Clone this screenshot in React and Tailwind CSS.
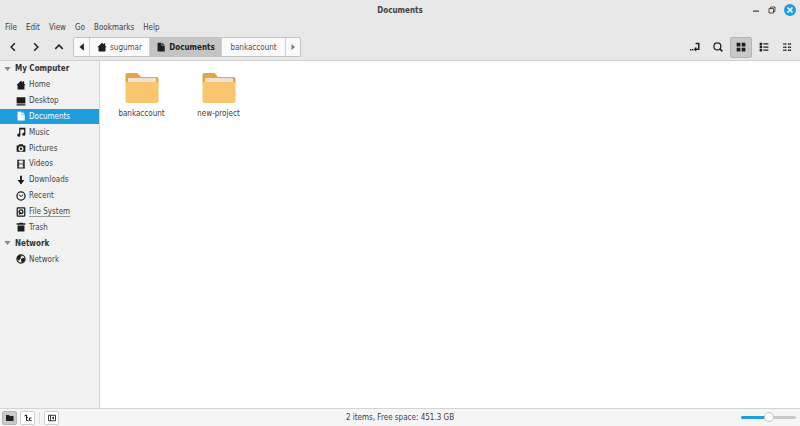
import React, { useState } from 'react';


const menus = ['File', 'Edit', 'View', 'Go', 'Bookmarks', 'Help'];

const places = [
  { id: 'home', label: 'Home' },
  { id: 'desktop', label: 'Desktop' },
  { id: 'documents', label: 'Documents' },
  { id: 'music', label: 'Music' },
  { id: 'pictures', label: 'Pictures' },
  { id: 'videos', label: 'Videos' },
  { id: 'downloads', label: 'Downloads' },
  { id: 'recent', label: 'Recent' },
  { id: 'filesystem', label: 'File System' },
  { id: 'trash', label: 'Trash' },
];

const folders = ['bankaccount', 'new-project'];

// 16x16 symbolic icons
const shapes = {
  home: <path d="M8 1 0.5 8.500H2.500V15h11V8.500h2L13 6V2h-2v2z" />,
  desktop: <path d="M1 2h14v10H1zM1 13h14v2H1z" />,
  documents: <path d="M2.500 1H9v5h5v9H2.500zM10 1l4 4h-4z" />,
  music: <path d="M5 1h10v10.500a2.500 2.500 0 1 1-2-2.400V4H7v9a2.500 2.500 0 1 1-2-2.400z" />,
  pictures: <path fillRule="evenodd" d="M5 2h6l1 2h3v10H1V4h3zM8 5a4 4 0 1 0 0 8 4 4 0 0 0 0-8zm0 2a2 2 0 1 1 0 4 2 2 0 0 1 0-4z" />,
  videos: <path fillRule="evenodd" d="M2 1h12v14H2zM5 2.500v4.500h6V2.500zm0 6v5h6v-5zM3 3v1.500h1V3zm0 4v1.500h1V7zm0 4v1.500h1V11zm9-8v1.500h1V3zm0 4v1.500h1V7zm0 4v1.500h1V11z" />,
  downloads: <path d="M6.500 1h3v7H13.500L8 15 2.500 8h4z" />,
  recent: (
    <g fill="none" stroke="currentColor" strokeWidth="2">
      <circle cx="8" cy="8" r="6.500" />
      <path d="M4.500 6 8 8.500l3.500-2.500" strokeWidth="1.500" />
    </g>
  ),
  filesystem: (
    <g fill="none" stroke="currentColor" strokeWidth="2">
      <rect x="2" y="1.500" width="12" height="13" rx="1" />
      <circle cx="8" cy="7.500" r="3" />
      <path d="M7.500 8 5 12" />
    </g>
  ),
  trash: <path d="M1 2h4V1h6v1h4v2.500H1zM2.500 5.500h11V15h-11z" />,
  network: (
    <>
      <circle cx="8" cy="8" r="6.500" fill="none" stroke="currentColor" strokeWidth="2" />
      <path d="M2 4 7 1l2 2-2 2 1 2-2 1-1 3-3-3zM8 8l4-2 2.500 3L11 14l-2-1-1-3z" />
    </>
  ),
  prev: <path d="M11 2v12L4 8z" />,
  next: <path d="M5 2v12l7-6z" />,
  back: <path d="M11 2 5 8l6 6" fill="none" stroke="currentColor" strokeWidth="2.400" />,
  forward: <path d="M5 2l6 6-6 6" fill="none" stroke="currentColor" strokeWidth="2.400" />,
  up: <path d="M2 11l6-6 6 6" fill="none" stroke="currentColor" strokeWidth="2.400" />,
  entry: (
    <>
      <path d="M9 2.500h5v9H9" fill="none" stroke="currentColor" strokeWidth="2.400" />
      <path d="M10 7.500v8l-4-4zM0 11h2.200v2.400H0zM3.200 11h2.200v2.400H3.200z" />
    </>
  ),
  search: (
    <g fill="none" stroke="currentColor" strokeWidth="2">
      <circle cx="7" cy="7" r="5.500" />
      <path d="M11 11l4 4" strokeWidth="2.500" />
    </g>
  ),
  grid: <path d="M1 1h6v6H1zM9 1h6v6H9zM1 9h6v6H1zM9 9h6v6H9z" />,
  list: <path d="M1 1h4v4H1zM1 6h4v4H1zM1 11h4v4H1zM7 2h8v2H7zM7 7h8v2H7zM7 12h8v2H7z" />,
  compact: <path d="M2 2h2v2.500H2zM4.500 2h2.500v2.500H4.500zM2 7h2v2.500H2zM4.500 7h2.500v2.500H4.500zM2 12h2v2.500H2zM4.500 12h2.500v2.500H4.500zM9.500 2h2v2.500h-2zM12 2h2.500v2.500H12zM9.500 7h2v2.500h-2zM12 7h2.500v2.500H12zM9.500 12h2v2.500h-2zM12 12h2.500v2.500H12z" />,
  folder: <path d="M0 2h6l1.500 2H15v10H0z" />,
  tree: (
    <g fill="none" stroke="currentColor" strokeWidth="2">
      <path d="M1 4l4-2v11h4M5 7h3" />
      <path d="M15 8h-4v5h4" />
    </g>
  ),
  panel: (
    <>
      <path d="M1 2.500h14v11H1zM5 2.500v11" fill="none" stroke="currentColor" strokeWidth="1.800" />
      <path d="M12 5v6L7 8z" />
    </>
  ),
  minimize: <path d="M2 9h12v2.500H2z" />,
  restore: <path d="M2 5h9v9H2zM5 5V2h9v9h-3" fill="none" stroke="currentColor" strokeWidth="1.800" />,
  close: <path d="M3 3l10 10M13 3 3 13" fill="none" stroke="currentColor" strokeWidth="3" />,
};

const Icon = ({ name, className = 'size-[10px]' }) => (
  <svg viewBox="0 0 16 16" fill="currentColor" aria-hidden="true" className={`shrink-0 ${className}`}>
    {shapes[name]}
  </svg>
);

const Folder = () => (
  <svg viewBox="0 0 34 30" aria-hidden="true" className="w-[34px] h-[30px]">
    <path d="M2 0h10.500l3.500 4h16q1.500 0 1.500 2v4h-33V2q0-2 1.500-2z" fill="#dfa64c" />
    <rect x="3" y="5" width="28" height="8" rx="1" fill="#ece3d3" />
    <path d="M2 9h30q1.500 0 1.500 1v18q0 2-2 2h-29q-2 0-2-2V10q0-1 1.500-1z" fill="#f9c56f" />
  </svg>
);

const SectionTitle = ({ children }) => (
  <h2 className="flex items-center gap-1 pl-1 font-bold text-[#303030]">
    <svg viewBox="0 0 8 5" aria-hidden="true" className="w-[7px] h-[4px] fill-[#888]">
      <path d="M0 0h8L4 5z" />
    </svg>
    {children}
  </h2>
);

const Place = ({ id, label, active, onClick }) => (
  <button
    onClick={() => onClick(id)}
    className={`w-full min-h-0 flex items-center gap-[3px] pl-4 ${active ? 'bg-[#1f9ede] text-white' : 'text-[#454545]'}`}
  >
    <Icon name={id} className={active ? 'size-[10px] text-white' : 'size-[10px] text-[#1c1c1c]'} />
    <span className={id === 'filesystem' ? 'underline underline-offset-2 decoration-[#999]' : ''}>{label}</span>
  </button>
);


const App = () => {
  const [place, setPlace] = useState('documents');
  const [view, setView] = useState('grid');
  const [zoom, setZoom] = useState(50);

  const viewButton = (id) =>
    `w-[22px] h-[21px] grid place-items-center rounded-xs border ${view === id ? 'bg-[#c9c9c9] border-[#b4b4b4]' : 'border-transparent'}`;

  return (
    <div className="min-h-screen flex flex-col bg-[#e8e8e8] font-['DejaVu_Sans_Condensed','Open_Sans',sans-serif] text-[8px] leading-[11px] text-[#404040]">

      {/* Title bar */}
      <header className="h-5 grid grid-cols-[1fr_auto_1fr] items-center px-1">
        <h1 className="col-start-2 font-semibold">Documents</h1>
        <div className="flex items-center justify-end gap-2">
          <button aria-label="Minimize"><Icon name="minimize" className="size-[8px]" /></button>
          <button aria-label="Restore"><Icon name="restore" className="size-[8px]" /></button>
          <button aria-label="Close" className="size-[12px] grid place-items-center rounded-full bg-[#1f9ede] text-white">
            <Icon name="close" className="size-[8px]" />
          </button>
        </div>
      </header>

      {/* Menu */}
      <nav className="h-[14px] flex items-center gap-[9px] px-[5px]">
        {menus.map((menu) => (
          <button key={menu}>{menu}</button>
        ))}
      </nav>

      {/* Toolbar */}
      <div className="h-[27px] flex items-center border-b border-[#d0d0d0] px-[2px] text-[#202020]">
        <div className="flex">
          <button aria-label="Back" className="w-[22px] grid place-items-center"><Icon name="back" /></button>
          <button aria-label="Forward" className="w-[23px] grid place-items-center"><Icon name="forward" /></button>
          <button aria-label="Up" className="w-[23px] grid place-items-center"><Icon name="up" /></button>
        </div>
        <div className="ml-[3px] h-5 flex rounded-xs border border-[#c4c4c4] bg-[#fafafa] divide-x divide-[#cfcfcf]">
          <button aria-label="Earlier folders" className="w-[16px] grid place-items-center"><Icon name="prev" /></button>
          <button className="w-[60px] flex items-center justify-center gap-[3px] text-[#505050]">
            <Icon name="home" className="size-[10px] text-[#1c1c1c]" />
            sugumar
          </button>
          <button className="w-[72px] flex items-center justify-center gap-[3px] bg-[#c4c4c4] font-bold">
            <Icon name="documents" />
            Documents
          </button>
          <button className="w-[64px] text-[#505050]">bankaccount</button>
          <button aria-label="Later folders" className="w-[14px] grid place-items-center text-[#777]"><Icon name="next" className="size-[8px]" /></button>
        </div>
        <div className="ml-auto flex items-center gap-px">
          <button aria-label="Toggle location entry" className="w-[22px] h-[21px] grid place-items-center"><Icon name="entry" /></button>
          <button aria-label="Search" className="w-[22px] h-[21px] grid place-items-center"><Icon name="search" /></button>
          <button aria-label="Icon view" onClick={() => setView('grid')} className={viewButton('grid')}><Icon name="grid" /></button>
          <button aria-label="List view" onClick={() => setView('list')} className={viewButton('list')}><Icon name="list" /></button>
          <button aria-label="Compact view" onClick={() => setView('compact')} className={viewButton('compact')}><Icon name="compact" /></button>
        </div>
      </div>

      <div className="flex-1 flex">
        {/* Sidebar */}
        <aside className="w-[100px] shrink-0 border-r border-[#d4d4d4] bg-[#f2f2f2]">
          <div className="h-[206px] grid auto-rows-fr">
            <SectionTitle>My Computer</SectionTitle>
            {places.map((item) => (
              <Place key={item.id} {...item} active={place === item.id} onClick={setPlace} />
            ))}
            <SectionTitle>Network</SectionTitle>
            <Place id="network" label="Network" active={place === 'network'} onClick={setPlace} />
          </div>
        </aside>

        {/* Files */}
        <main className="flex-1 bg-white">
          <div className="flex flex-wrap pt-3 pl-[3px]">
            {folders.map((name) => (
              <button key={name} className="w-[77px] flex flex-col items-center gap-[5px]">
                <Folder />
                {name}
              </button>
            ))}
          </div>
        </main>
      </div>

      {/* Status bar */}
      <footer className="h-[18px] grid grid-cols-[1fr_auto_1fr] items-center border-t border-[#d4d4d4] bg-[#f5f5f5] px-[2px]">
        <div className="flex items-center gap-[3px] text-[#202020]">
          <button aria-label="Places" className="w-[15px] h-[14px] grid place-items-center rounded-xs border border-[#b4b4b4] bg-[#c9c9c9]"><Icon name="folder" className="size-[8px]" /></button>
          <button aria-label="Tree" className="w-[15px] h-[14px] grid place-items-center rounded-xs border border-[#d0d0d0] bg-white"><Icon name="tree" className="size-[8px]" /></button>
          <span className="mx-px h-3 border-l border-[#dcdcdc]" />
          <button aria-label="Hide sidebar" className="w-[15px] h-[14px] grid place-items-center rounded-xs border border-[#d0d0d0] bg-white"><Icon name="panel" className="size-[8px]" /></button>
        </div>
        <p>2 items, Free space: 451.3 GB</p>
        <input
          type="range"
          aria-label="Zoom"
          value={zoom}
          onChange={(e) => setZoom(Number(e.target.value))}
          style={{ '--zoom': `${zoom}%` }}
          className="justify-self-end mr-[2px] w-[55px] h-[10px] appearance-none bg-transparent [&::-webkit-slider-runnable-track]:h-[3px] [&::-webkit-slider-runnable-track]:rounded-full [&::-webkit-slider-runnable-track]:bg-[linear-gradient(to_right,#1f9ede_var(--zoom),#c8c8c8_var(--zoom))] [&::-webkit-slider-thumb]:appearance-none [&::-webkit-slider-thumb]:size-[10px] [&::-webkit-slider-thumb]:mt-[-4px] [&::-webkit-slider-thumb]:rounded-full [&::-webkit-slider-thumb]:border [&::-webkit-slider-thumb]:border-[#c4c4c4] [&::-webkit-slider-thumb]:bg-white"
        />
      </footer>
    </div>
  )
};



export default App;
